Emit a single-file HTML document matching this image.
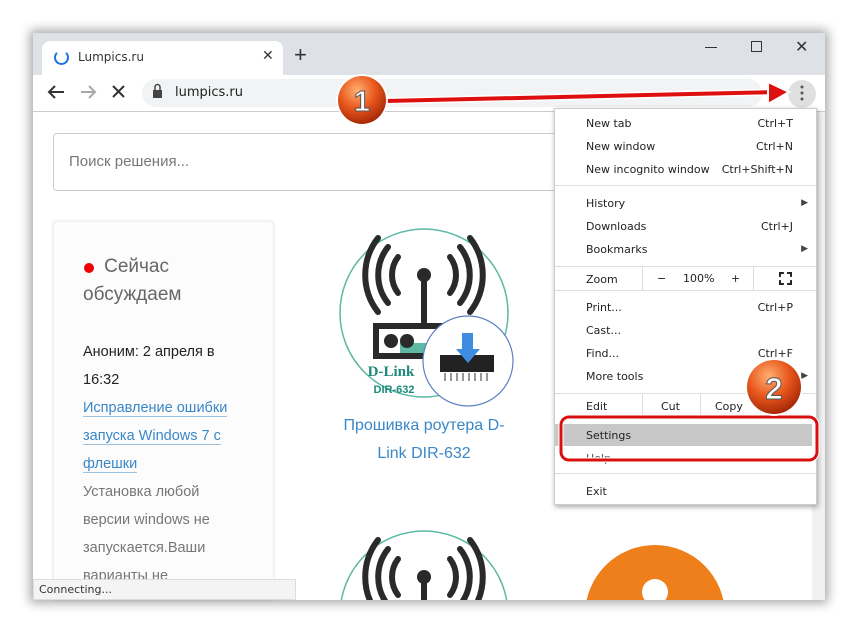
<!DOCTYPE html>
<html style="width:858px;height:633px;overflow:hidden"><head><meta charset="utf-8"><style>
*{margin:0;padding:0;box-sizing:border-box}
body{width:858px;height:633px;background:#fff;position:relative;overflow:hidden;font-family:"Liberation Sans",sans-serif}
#root{position:absolute;left:0;top:0;width:858px;height:633px;overflow:hidden}
.a{position:absolute}
#win{left:33px;top:33px;width:792px;height:567px;background:#fff;box-shadow:0 0 10px 3px rgba(0,0,0,.35);overflow:hidden}
.mi{position:absolute;left:586px;color:#222;font-family:"DejaVu Sans","Liberation Sans",sans-serif;font-size:11px}
.sc{position:absolute;right:65px;font-size:11px;color:#222;font-family:"DejaVu Sans",sans-serif}
.ar{position:absolute;right:50px;font-size:9px;color:#444}
.sep{position:absolute;left:555px;width:261px;height:1px;background:#ddd}
.side{font-family:"Liberation Sans",sans-serif}
.lnk{color:#3a87c8;border-bottom:1px solid #9cc3e4}
</style></head><body><div id="root">
<div id="win" class="a"></div>
<div class="a" style="left:33px;top:33px;width:792px;height:42px;background:#dee1e6"></div>
<div class="a" style="left:42px;top:41px;width:241px;height:34px;background:#fff;border-radius:8px 8px 0 0"></div>
<div class="a" style="left:54px;top:50px;width:15px;height:15px;border:2px solid #1a73e8;border-top-color:transparent;border-radius:50%"></div>
<div class="a" style="left:78px;top:50px;color:#333;font-family:'DejaVu Sans',sans-serif;font-size:12px">Lumpics.ru</div>
<div class="a" style="left:262px;top:47px;font-size:14px;color:#333">✕</div>
<div class="a" style="left:294px;top:42px;font-size:22px;color:#333">+</div>
<div class="a" style="left:705px;top:47px;width:12px;height:1px;background:#333"></div>
<div class="a" style="left:751px;top:41px;width:11px;height:11px;border:1px solid #333"></div>
<div class="a" style="left:795px;top:37px;font-size:16px;color:#333">✕</div>
<div class="a" style="left:33px;top:111px;width:792px;height:1px;background:#ccc"></div>
<div class="a" style="left:142px;top:79px;width:620px;height:28px;background:#f1f3f4;border-radius:14px"></div>
<div class="a" style="left:175px;top:85px;font-size:13px;color:#222;font-family:'DejaVu Sans',sans-serif">lumpics.ru</div>
<div class="a" style="left:788px;top:80px;width:28px;height:28px;background:#e0e0e0;border-radius:50%"></div>
<div class="a" style="left:53px;top:133px;width:520px;height:58px;border:1px solid #ccc;border-radius:4px"></div>
<div class="a side" style="left:69px;top:153px;font-size:15px;color:#777">Поиск решения...</div>
<div class="a" style="left:53px;top:221px;width:221px;height:379px;background:#fcfcfc;border:1px solid #eee;border-bottom:none;border-radius:4px 4px 0 0;box-shadow:0 0 3px rgba(0,0,0,.1)"></div>
<div class="a" style="left:84px;top:263px;width:10px;height:10px;background:#e00;border-radius:50%"></div>
<div class="a side" style="left:83px;top:253px;font-size:19px;color:#666;line-height:28px;width:180px">&nbsp;&nbsp;&nbsp;&nbsp;Сейчас обсуждаем</div>
<div class="a" style="left:83px;top:338px;width:180px;height:262px;overflow:hidden">
<div class="side" style="font-size:14.5px;color:#222;line-height:28px;width:160px">Аноним: 2 апреля в 16:32<br><span class="lnk">Исправление ошибки</span><br><span class="lnk">запуска Windows 7 с</span><br><span class="lnk">флешки</span><br><span style="color:#777">Установка любой<br>версии windows не<br>запускается.Ваши<br>варианты не</span></div></div>
<div class="a side" style="left:330px;top:412px;width:188px;text-align:center;font-size:16px;color:#3a87c8;line-height:28px">Прошивка роутера D-Link DIR-632</div>
<div class="a" style="left:585px;top:530px;width:140px;height:70px;overflow:hidden"><div style="margin-top:15px;width:140px;height:140px;background:#ef7f1a;border-radius:50%"></div></div>
<div class="a" style="left:33px;top:579px;width:263px;height:21px;background:#f4f4f4;border:1px solid #ddd;font-size:11px;color:#333;padding:3px 5px;font-family:'DejaVu Sans',sans-serif">Connecting...</div>
<div class="a" style="left:812px;top:112px;width:13px;height:488px;background:#f1f1f1"></div>
<svg class="a" style="left:0;top:0" width="858" height="633">
<defs><clipPath id="cw"><rect x="33" y="112" width="779" height="488"/></clipPath></defs>
<g fill="none" stroke="#333" stroke-width="2"><path d="M64 92H49M55 86l-6 6 6 6"/></g>
<g fill="none" stroke="#aaa" stroke-width="2"><path d="M81 92h14M89 86l6 6-6 6"/></g>
<path d="M113 86l11 11M124 86l-11 11" stroke="#333" stroke-width="2"/>
<rect x="153" y="90" width="9" height="8" fill="#444"/><path d="M155 90v-3a2.5 2.5 0 0 1 5 0v3" stroke="#444" fill="none" stroke-width="1.5"/>
<circle cx="802" cy="87" r="1.5" fill="#555"/><circle cx="802" cy="93" r="1.5" fill="#555"/><circle cx="802" cy="99" r="1.5" fill="#555"/>
<circle cx="424" cy="313" r="84" fill="#fff" stroke="#5db8a4" stroke-width="1.5"/>
<g fill="none" stroke="#2a2a2a" stroke-width="6" stroke-linecap="round">
<path d="M398 257a30 30 0 0 0 0 36M450 257a30 30 0 0 1 0 36"/>
<path d="M388 247a45 45 0 0 0 0 56M460 247a45 45 0 0 1 0 56"/>
<path d="M378 238a60 60 0 0 0 0 74M470 238a60 60 0 0 1 0 74"/>
<path d="M424 275v50"/></g>
<circle cx="424" cy="275" r="7" fill="#2a2a2a"/>
<rect x="376" y="326" width="96" height="30" fill="none" stroke="#2a2a2a" stroke-width="6"/>
<rect x="400" y="343" width="60" height="10" fill="#5db8a4"/>
<circle cx="391" cy="341" r="7" fill="#2a2a2a"/><circle cx="407" cy="341" r="7" fill="#2a2a2a"/>
<text x="391" y="376" font-family="Liberation Serif" font-weight="bold" font-size="15" fill="#1e8a7a" text-anchor="middle">D-Link</text>
<text x="394" y="393" font-family="Liberation Sans" font-weight="bold" font-size="11" fill="#1e8a7a" text-anchor="middle">DIR-632</text>
<circle cx="468" cy="361" r="45" fill="#fff" stroke="#5a80c0" stroke-width="1.2"/>
<rect x="440" y="355" width="54" height="17" fill="#222"/>
<g stroke="#999" stroke-width="2"><path d="M445 373v8M451 373v8M457 373v8M463 373v8M469 373v8M475 373v8M481 373v8M487 373v8"/></g>
<path d="M462 349v-16h11v16h7l-12 14-12-14z" fill="#3f8de0"/>
<g clip-path="url(#cw)">
<circle cx="424" cy="615" r="84" fill="#fff" stroke="#5db8a4" stroke-width="1.5"/>
<g fill="none" stroke="#2a2a2a" stroke-width="6" stroke-linecap="round">
<path d="M398 559a30 30 0 0 0 0 36M450 559a30 30 0 0 1 0 36"/>
<path d="M388 549a45 45 0 0 0 0 56M460 549a45 45 0 0 1 0 56"/>
<path d="M378 540a60 60 0 0 0 0 74M470 540a60 60 0 0 1 0 74"/>
<path d="M424 577v30"/></g>
<circle cx="424" cy="577" r="7" fill="#2a2a2a"/>
<circle cx="655" cy="592" r="13" fill="#fff"/>
</g>
</svg>
<div class="a" style="left:554px;top:108px;width:263px;height:397px;background:#fff;border:1px solid #ccc;box-shadow:1px 2px 5px rgba(0,0,0,.35)"></div>
<div class="mi" style="top:117px">New tab</div><div class="sc" style="top:117px">Ctrl+T</div>
<div class="mi" style="top:140px">New window</div><div class="sc" style="top:140px">Ctrl+N</div>
<div class="mi" style="top:163px">New incognito window</div><div class="sc" style="top:163px">Ctrl+Shift+N</div>
<div class="sep" style="top:185px"></div>
<div class="mi" style="top:197px">History</div><div class="ar" style="top:197px">▶</div>
<div class="mi" style="top:220px">Downloads</div><div class="sc" style="top:220px">Ctrl+J</div>
<div class="mi" style="top:243px">Bookmarks</div><div class="ar" style="top:243px">▶</div>
<div class="sep" style="top:266px"></div>
<div class="mi" style="top:273px">Zoom</div>
<div class="a" style="left:642px;top:266px;width:1px;height:24px;background:#ddd"></div>
<div class="a" style="left:753px;top:266px;width:1px;height:24px;background:#ddd"></div>
<div class="mi" style="top:272px;left:657px">−</div><div class="mi" style="top:272px;left:683px">100%</div><div class="mi" style="top:272px;left:731px">+</div>
<div class="a" style="left:779px;top:272px;width:13px;height:13px;border:2px dashed #222"></div>
<div class="sep" style="top:290px"></div>
<div class="mi" style="top:301px">Print...</div><div class="sc" style="top:301px">Ctrl+P</div>
<div class="mi" style="top:324px">Cast...</div>
<div class="mi" style="top:347px">Find...</div><div class="sc" style="top:347px">Ctrl+F</div>
<div class="mi" style="top:370px">More tools</div><div class="ar" style="top:370px">▶</div>
<div class="sep" style="top:393px"></div>
<div class="mi" style="top:400px">Edit</div>
<div class="a" style="left:642px;top:393px;width:1px;height:27px;background:#ddd"></div>
<div class="a" style="left:700px;top:393px;width:1px;height:27px;background:#ddd"></div>
<div class="mi" style="top:400px;left:661px">Cut</div><div class="mi" style="top:400px;left:715px">Copy</div>
<div class="a" style="left:555px;top:424px;width:257px;height:22px;background:#c8c8c8"></div>
<div class="mi" style="top:429px">Settings</div>
<div class="mi" style="top:452px;color:#555">Help</div>
<div class="sep" style="top:473px"></div>
<div class="mi" style="top:485px">Exit</div>
<svg class="a" style="left:0;top:0" width="858" height="633">
<defs><radialGradient id="og" cx="40%" cy="30%" r="70%"><stop offset="0" stop-color="#ffb070"/><stop offset=".55" stop-color="#e8561c"/><stop offset="1" stop-color="#a82a08"/></radialGradient></defs>
<rect x="561" y="417" width="256" height="43" rx="8" fill="none" stroke="#fff" stroke-width="5"/>
<rect x="561" y="417" width="256" height="43" rx="8" fill="none" stroke="#d81010" stroke-width="3"/>
<path d="M385 101L780 92" stroke="#fff" stroke-width="7"/>
<path d="M385 101L780 92" stroke="#dd0f0f" stroke-width="4"/>
<path d="M768 82l21 10-21 12z" fill="#dd0f0f" stroke="#fff" stroke-width="2"/>
<circle cx="362" cy="100" r="26" fill="#fff" opacity=".9"/>
<circle cx="362" cy="100" r="24" fill="url(#og)"/>
<text x="362" y="111" text-anchor="middle" font-size="29" font-weight="bold" fill="#fff" stroke="#555" stroke-width="1" font-family="Liberation Sans">1</text>
<circle cx="774" cy="387" r="29" fill="#fff" opacity=".9"/>
<circle cx="774" cy="387" r="27" fill="url(#og)"/>
<text x="774" y="399" text-anchor="middle" font-size="31" font-weight="bold" fill="#fff" stroke="#555" stroke-width="1" font-family="Liberation Sans">2</text>
</svg>
</div></body></html>
